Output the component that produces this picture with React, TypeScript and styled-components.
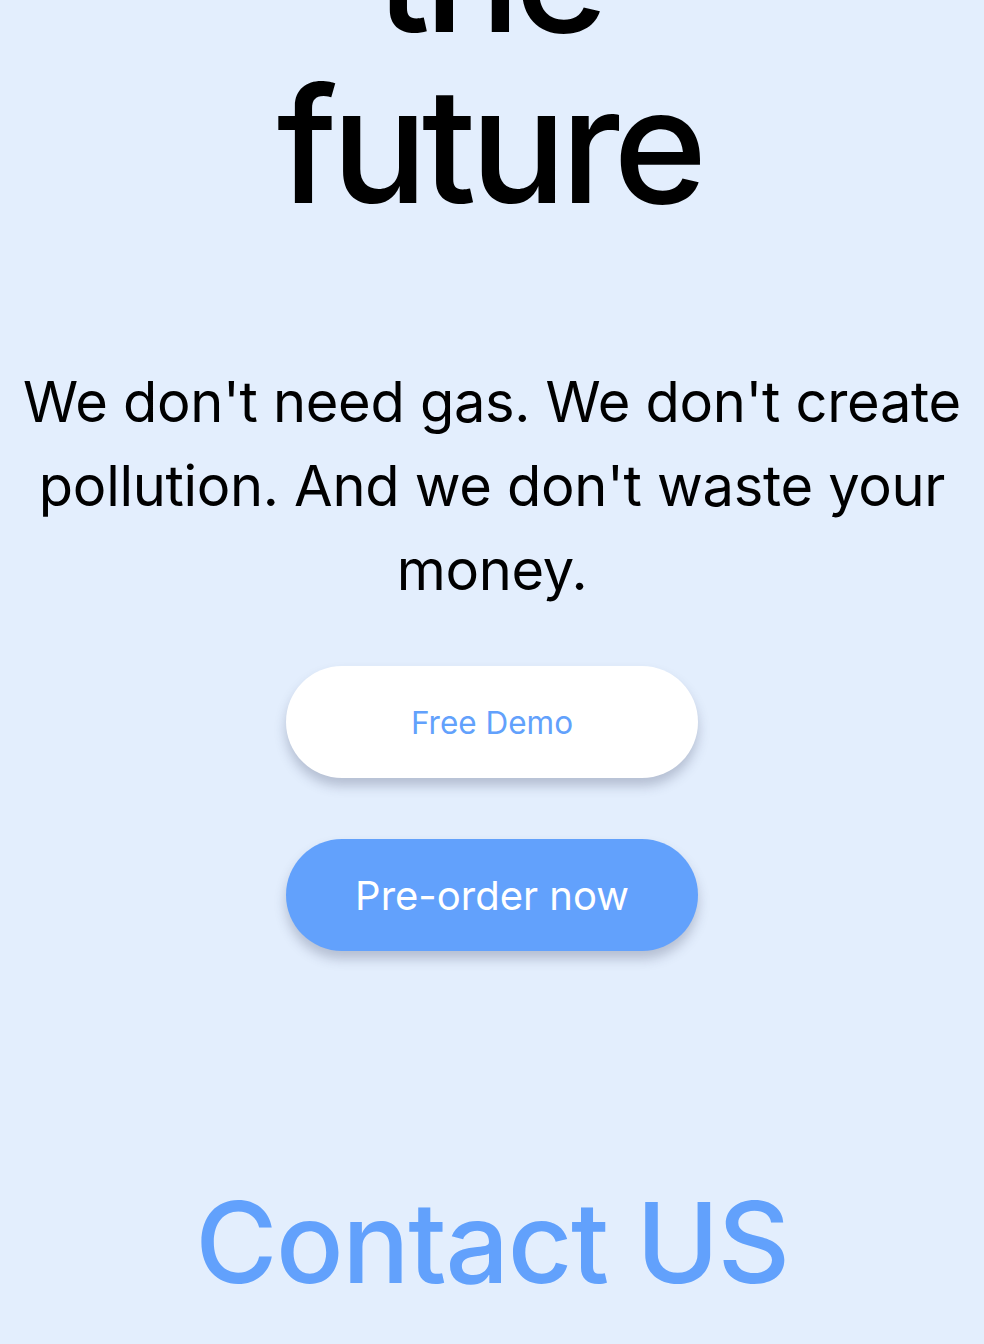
import React from "react";
import styled, { createGlobalStyle } from "styled-components";

const GlobalStyle = createGlobalStyle`
  html, body {
    margin: 0;
    padding: 0;
    background: #e3eefd;
  }
  body {
    font-family: Inter, "Noto Sans", sans-serif;
    color: #000;
    overflow: hidden;
  }
`;

const Page = styled.main`
  display: flex;
  flex-direction: column;
  align-items: center;
  margin-top: -111px;
  min-height: 1500px;
  background: #e3eefd;
`;

const Hero = styled.section`
  display: flex;
  flex-direction: column;
  align-items: center;
  width: 100%;
`;

const Title = styled.h1`
  margin: 0 6px 0 0;
  max-width: 520px;
  font-size: 160px;
  line-height: 171px;
  font-weight: 500;
  letter-spacing: -6px;
  text-align: center;
`;

const Lead = styled.p`
  margin: 129px 0 0;
  padding: 0 10px;
  box-sizing: border-box;
  width: 100%;
  font-size: 56px;
  line-height: 84px;
  font-weight: 400;
  letter-spacing: -0.3px;
  text-align: center;
`;

const Actions = styled.div`
  display: flex;
  flex-direction: column;
  align-items: center;
  gap: 61px;
  margin-top: 54px;
`;

const PillButton = styled.button<{ $primary?: boolean }>`
  display: flex;
  align-items: center;
  justify-content: center;
  width: 412px;
  height: 112px;
  border: none;
  border-radius: 56px;
  font-family: Inter, "Noto Sans", sans-serif;
  font-weight: 400;
  font-size: ${(p) => (p.$primary ? "40px" : "31.5px")};
  background: ${(p) => (p.$primary ? "#62a1fc" : "#ffffff")};
  color: ${(p) => (p.$primary ? "#ffffff" : "#62a1fc")};
  box-shadow: 0 8px 12px rgba(60, 70, 100, 0.28);
  cursor: pointer;
`;

const Contact = styled.h2`
  margin: 224px 0 0;
  font-size: 112px;
  line-height: 1.2;
  font-weight: 500;
  letter-spacing: -1.4px;
  color: #62a1fc;
  text-align: center;
`;

export default function App() {
  return (
    <>
      <GlobalStyle />
      <Page>
        <Hero>
          <Title>the future</Title>
          <Lead>
            We don't need gas. We don't create pollution. And we don't waste
            your money.
          </Lead>
          <Actions>
            <PillButton>Free Demo</PillButton>
            <PillButton $primary>Pre-order now</PillButton>
          </Actions>
        </Hero>
        <Contact>Contact US</Contact>
      </Page>
    </>
  );
}
